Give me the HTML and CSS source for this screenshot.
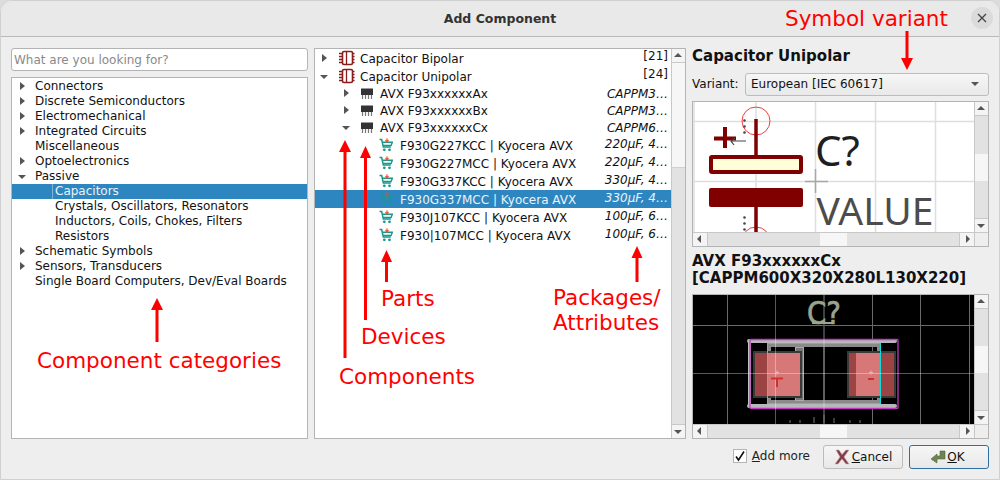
FILE: index.html
```html
<!DOCTYPE html>
<html lang="en">
<head>
<meta charset="utf-8">
<title>Add Component</title>
<link rel="stylesheet" href="styles.css">
</head>
<body>
<svg class="defs" width="0" height="0" aria-hidden="true">
  <symbol id="chip" viewBox="0 0 16 16">
    <rect x="3.500" y="1.500" width="10" height="13" rx="1.500" fill="#fff" stroke="#8a1c1c" stroke-width="1.600"/>
    <path d="M7.500 2v12M0 3.500h3M0 6.500h3M0 9.500h3M0 12.500h3M13.500 3.500h2M13.500 6.500h2M13.500 9.500h2M13.500 12.500h2" stroke="#8a1c1c" stroke-width="1.300" fill="none"/>
  </symbol>
  <symbol id="device" viewBox="0 0 14 14">
    <path d="M1 1.500h12v6.500H1z" fill="#333"/>
    <path d="M2.500 8v4M5.500 8v4M8.500 8v4M11.500 8v4" stroke="#777" stroke-width="1.200"/>
  </symbol>
  <symbol id="cart" viewBox="0 0 14 14">
    <path d="M.5 1.500h2.200l1.600 7.500h7.500" fill="none" stroke="#179a8c" stroke-width="1.500"/>
    <path d="M3.400 4.200h10l-1.300 3.300H4.200" fill="none" stroke="#179a8c" stroke-width="1.400"/>
    <circle cx="5.300" cy="11.800" r="1.400" fill="#179a8c"/><circle cx="10.500" cy="11.800" r="1.400" fill="#179a8c"/>
    <path d="M8 0v2.500M6.500 2.200h3L8 4.500z" fill="#e8502a" stroke="#e8502a" stroke-width=".8"/>
  </symbol>
</svg>

<main class="window">
  <header class="titlebar">
    <h1 class="title">Add Component</h1>
    <button class="close" type="button" aria-label="Close"><svg class="close-ic" viewBox="0 0 10 10"><path d="M1 1l8 8M9 1l-8 8" stroke="#444" stroke-width="1.300"/></svg></button>
  </header>

  <div class="content">
    <section class="col col-left">
      <div class="search">What are you looking for?</div>
      <ul class="cats">
        <li class="cat"><i class="tw r"></i>Connectors</li>
        <li class="cat"><i class="tw r"></i>Discrete Semiconductors</li>
        <li class="cat"><i class="tw r"></i>Electromechanical</li>
        <li class="cat"><i class="tw r"></i>Integrated Circuits</li>
        <li class="cat"><i class="tw"></i>Miscellaneous</li>
        <li class="cat"><i class="tw r"></i>Optoelectronics</li>
        <li class="cat"><i class="tw d"></i>Passive</li>
        <li class="cat sub sel"><span class="focus-label">Capacitors</span></li>
        <li class="cat sub">Crystals, Oscillators, Resonators</li>
        <li class="cat sub">Inductors, Coils, Chokes, Filters</li>
        <li class="cat sub">Resistors</li>
        <li class="cat"><i class="tw r"></i>Schematic Symbols</li>
        <li class="cat"><i class="tw r"></i>Sensors, Transducers</li>
        <li class="cat"><i class="tw"></i>Single Board Computers, Dev/Eval Boards</li>
      </ul>
    </section>

    <section class="col-mid">
      <ul class="parts">
        <li class="row"><i class="tw r"></i><svg class="ic-chip"><use href="#chip"/></svg><span class="name">Capacitor Bipolar</span><span class="count">[21]</span></li>
        <li class="row"><i class="tw d"></i><svg class="ic-chip"><use href="#chip"/></svg><span class="name">Capacitor Unipolar</span><span class="count">[24]</span></li>
        <li class="row l2"><i class="tw r"></i><svg class="ic-dev"><use href="#device"/></svg><span class="name">AVX F93xxxxxxAx</span><span class="val">CAPPM3…</span></li>
        <li class="row l2"><i class="tw r"></i><svg class="ic-dev"><use href="#device"/></svg><span class="name">AVX F93xxxxxxBx</span><span class="val">CAPPM3…</span></li>
        <li class="row l2"><i class="tw d"></i><svg class="ic-dev"><use href="#device"/></svg><span class="name">AVX F93xxxxxxCx</span><span class="val">CAPPM6…</span></li>
        <li class="row l3"><svg class="ic-cart"><use href="#cart"/></svg><span class="name">F930G227KCC | Kyocera AVX</span><span class="val">220μF, 4…</span></li>
        <li class="row l3"><svg class="ic-cart"><use href="#cart"/></svg><span class="name">F930G227MCC | Kyocera AVX</span><span class="val">220μF, 4…</span></li>
        <li class="row l3"><svg class="ic-cart"><use href="#cart"/></svg><span class="name">F930G337KCC | Kyocera AVX</span><span class="val">330μF, 4…</span></li>
        <li class="row l3 sel"><svg class="ic-cart"><use href="#cart"/></svg><span class="name">F930G337MCC | Kyocera AVX</span><span class="val">330μF, 4…</span></li>
        <li class="row l3"><svg class="ic-cart"><use href="#cart"/></svg><span class="name">F930J107KCC | Kyocera AVX</span><span class="val">100μF, 6…</span></li>
        <li class="row l3"><svg class="ic-cart"><use href="#cart"/></svg><span class="name">F930|107MCC | Kyocera AVX</span><span class="val">100μF, 6…</span></li>
      </ul>
      <div class="vbar">
        <span class="sb-btn up"></span><span class="thumb-long"></span><span class="track"></span><span class="sb-btn down"></span>
      </div>
    </section>

    <section class="col col-right">
      <h2 class="sym-title">Capacitor Unipolar</h2>
      <div class="variant">
        <label class="variant-label">Variant:</label>
        <div class="combo"><span>European [IEC 60617]</span><i class="combo-arrow"></i></div>
      </div>

      <div class="viewer viewer-sym">
        <svg class="canvas" viewBox="693 102 281 130">
          <rect x="693" y="102" width="281" height="130" fill="#fff"/>
          <path d="M694 102v130M756 102v130M815.500 102v130M875.500 102v130M935.500 102v130M693 121.500h281M693 181.500h281" stroke="#dedede" stroke-width="1.500" fill="none"/>
          <path d="M805 181.500h23M815.500 169v24" stroke="#a8a8a8" stroke-width="1.500" fill="none"/>
          <circle cx="756" cy="121" r="14" fill="none" stroke="#f04040" stroke-width="1"/>
          <circle cx="756" cy="241" r="14" fill="none" stroke="#f04040" stroke-width="1"/>
          <path d="M756 119v36M756 207v25" stroke="#800000" stroke-width="3.500"/>
          <path d="M714 138.500h22M725 127v21" stroke="#800000" stroke-width="4"/>
          <rect x="711" y="157" width="90" height="15" rx="1" fill="#ffffd8" stroke="#800000" stroke-width="4"/>
          <rect x="709" y="188" width="94" height="19" rx="2" fill="#800000"/>
          <path d="M746 141h-15M735 138l-4 3 3 4" fill="none" stroke="#444" stroke-width="1.200"/>
          <g fill="#445"><circle cx="744.500" cy="120.500" r="1.300"/><circle cx="744.500" cy="126.500" r="1.300"/><circle cx="744.500" cy="132.500" r="1.300"/><circle cx="744.500" cy="217.500" r="1.300"/><circle cx="744.500" cy="223.500" r="1.300"/><circle cx="744.500" cy="229.500" r="1.300"/></g>
          <text class="sym-ref" x="815" y="166">C?</text>
          <text class="sym-val" x="816.500" y="225">VALUE</text>
        </svg>
        <div class="vbar"><span class="sb-btn up"></span><span class="track"></span><span class="thumb"></span><span class="track"></span><span class="sb-btn down"></span></div>
        <div class="hbar"><span class="sb-btn left"></span><span class="track"></span><span class="thumb"></span><span class="track"></span><span class="sb-btn right"></span></div>
        <span class="corner"></span>
      </div>

      <h2 class="fp-title">AVX F93xxxxxxCx<br>[CAPPM600X320X280L130X220]</h2>

      <div class="viewer viewer-fp">
        <svg class="canvas" viewBox="693 295 281 129">
          <rect x="693" y="295" width="281" height="129" fill="#000"/>
          <path d="M727.500 295v129M872.500 295v129M920.500 295v129M969.500 295v129M693 325.500h281" stroke="#6a6a6a" stroke-width="1" fill="none"/>
          <path d="M824 295v129" stroke="#555" stroke-width="1.500"/>
          <text class="fp-ref" x="807" y="324" textLength="34" lengthAdjust="spacingAndGlyphs">C?</text>
          <path d="M812 323h20" stroke="#9aa58c" stroke-width="2"/>
          <rect x="769" y="345" width="110" height="57" fill="none" stroke="#8a8a8a" stroke-width="4"/>
          <rect x="795.500" y="347.500" width="8" height="53" fill="#777" stroke="#aaa" stroke-width="1"/>
          <rect x="753" y="351" width="49" height="47" fill="#3a3a3a"/>
          <rect x="847" y="351" width="49" height="47" fill="#3a3a3a"/>
          <rect x="755" y="353" width="45" height="43" fill="#9c4444"/>
          <rect x="849" y="353" width="45" height="43" fill="#9c4444"/>
          <rect x="767" y="353" width="33" height="43" fill="#d67878"/>
          <rect x="856" y="353" width="25" height="43" fill="#d67878"/>
          <path d="M749 341h146M749 406h146" stroke="#b8b8b8" stroke-width="4" stroke-linecap="round"/>
          <path d="M749.500 341v65" stroke="#c0c0c0" stroke-width="3"/>
          <rect x="767.500" y="343.500" width="113" height="60" fill="none" stroke="#10dcdc" stroke-width="1"/>
          <rect x="750" y="339.500" width="148" height="69" rx="1" fill="none" stroke="#c038c0" stroke-width="1.300"/>
          <path d="M775.500 295v129M693 373.500h281M824 339v70" stroke="#fff" stroke-opacity=".35" stroke-width="1"/>
          <path d="M771 378.500h12M777 378v9M868 379h6" stroke="#d03030" stroke-width="2"/>
          <path d="M775 372.500h4M777 370.500v4M869 372.500h4M871 370.500v4" stroke="#eeb0b0" stroke-width="1"/>
          <path d="M814 423v-6M824 423v-8M834 423v-5M790 423v-3M800 423v-3M850 423v-3M860 423v-3" stroke="#778" stroke-width="1"/>
        </svg>
        <div class="vbar"><span class="sb-btn up"></span><span class="track"></span><span class="thumb"></span><span class="track"></span><span class="sb-btn down"></span></div>
        <div class="hbar"><span class="sb-btn left"></span><span class="track"></span><span class="thumb"></span><span class="track"></span><span class="sb-btn right"></span></div>
        <span class="corner"></span>
      </div>
    </section>
  </div>

  <footer class="footer">
    <label class="check"><span class="box"><svg class="tick" viewBox="0 0 12 12"><path d="M2 6.500l2.500 3.500L10 1.500" fill="none" stroke="#111" stroke-width="1.600"/></svg></span><span><u>A</u>dd more</span></label>
    <button class="btn" type="button">
      <svg class="btn-ic" viewBox="0 0 16 16"><path d="M2 1h3l3 4.500L12 1h3l-5 7 5 7h-3l-4-5-4 5H1l5-7z" fill="#8c3a48" stroke="#b9b0b0" stroke-width=".6"/></svg>
      <span><u>C</u>ancel</span>
    </button>
    <button class="btn btn-ok" type="button">
      <svg class="btn-ic" viewBox="0 0 16 16"><path d="M1 10l6-5v2h3V2h5v8H7v4z" fill="#6d8550" stroke="#58663f" stroke-width=".6"/></svg>
      <span><u>O</u>K</span>
    </button>
  </footer>

  <div class="notes">
    <span class="note n-variant">Symbol variant</span>
    <span class="note n-cats">Component categories</span>
    <span class="note n-comps">Components</span>
    <span class="note n-devs">Devices</span>
    <span class="note n-parts">Parts</span>
    <span class="note n-pkgs">Packages/<br>Attributes</span>
    <svg class="arrows" viewBox="0 0 1000 480">
      <g fill="none" stroke="#f00" stroke-width="3">
        <path d="M907 31v30M157 342v-34M345 358V152M365.500 320V152M386.500 282v-24M637 282v-26"/>
      </g>
      <g fill="#f00">
        <path d="M901 58l6 12 6-12zM151 310l6-12 6 12zM339 152l6-12 6 12zM360 158l5.500-12 5.500 12zM381 262l5.500-12 5.500 12zM631.500 258l5.500-12 5.500 12z"/>
      </g>
    </svg>
  </div>
</main>
</body>
</html>
```

FILE: styles.css
```css
* { box-sizing: border-box; }
html, body { margin: 0; padding: 0; background: #dcdcdc; }
body { width: 1000px; height: 480px; overflow: hidden; font: 12px/15px "DejaVu Sans", sans-serif; color: #111; }
.defs { position: absolute; }
ul { list-style: none; margin: 0; padding: 0; }
h1, h2 { margin: 0; }

.window { position: relative; width: 1000px; height: 480px; background: #eeeeee; border-radius: 12px 12px 0 0; border: 1px solid #d0d0d0; display: flex; flex-direction: column; }
.titlebar { height: 36px; flex: none; background: #e9e9e9; border-bottom: 1px solid #b9b9b9; border-radius: 11px 11px 0 0; display: flex; align-items: center; justify-content: center; position: relative; }
.title { font-size: 12.500px; font-weight: 700; color: #333; }
.close { position: absolute; right: 6px; top: 6px; width: 22px; height: 22px; border: 0; padding: 6px; border-radius: 50%; background: #dbdbdb; }
.close-ic { display: block; width: 10px; height: 10px; }

.content { height: 402px; flex: none; padding: 11px 0 0 10px; display: flex; gap: 6px; }
.col { width: 297px; flex: none; display: flex; flex-direction: column; }
.col-mid { width: 372px; flex: none; height: 391px; background: #fff; border: 1px solid #b4b4b4; display: flex; }

.search { height: 23px; background: #fff; border: 1px solid #b4b4b4; border-radius: 3px; padding: 4px 2px; color: #8a8a8a; line-height: 15px; }
.cats { margin-top: 6px; height: 362px; background: #fff; border: 1px solid #b4b4b4; padding-top: 1px; }
.cat { height: 15px; display: flex; align-items: center; line-height: 15px; }
.cat .tw { margin-left: 8px; }
.sub { padding-left: 43px; }
.sel { background: #2e86c1; color: #eaf2f8; }
.focus-label { border-left: 1px solid #7fb4d8; padding-left: 2px; margin-left: -3px; }

.tw { position: relative; display: block; flex: none; width: 15px; height: 15px; }
.tw.r::before { content: ""; position: absolute; left: 0; top: 3px; border-left: 5px solid #555; border-top: 4.500px solid transparent; border-bottom: 4.500px solid transparent; }
.tw.d::before { content: ""; position: absolute; left: -2px; top: 6px; border-top: 4px solid #555; border-left: 4.500px solid transparent; border-right: 4.500px solid transparent; }

.parts { flex: 1; min-width: 0; }
.row { height: 18px; display: flex; align-items: center; padding-right: 3px; }
.row.l2 { height: 17px; }
.row .tw { margin-left: 7px; width: 17px; }
.row.l2 .tw { margin-left: 29px; width: 16px; }
.row.l3 { padding-left: 64px; }
.ic-chip { width: 16px; height: 16px; flex: none; margin-right: 5px; }
.ic-dev { width: 14px; height: 14px; flex: none; margin-right: 6px; }
.ic-cart { width: 14px; height: 14px; flex: none; margin-right: 7px; }
.row .name { flex: 1; white-space: nowrap; padding-top: 2px; }
.row .count { margin-bottom: 3px; }
.row .val { font-style: italic; }
.row.l2 .val { padding-top: 2px; }
.row.l3 .val { margin-bottom: 2px; }
.sel .ic-cart { opacity: .7; }

.vbar { width: 14px; flex: none; display: flex; flex-direction: column; background: #e2e2e2; border-left: 1px solid #c8c8c8; }
.track { flex: 1; background: #e2e2e2; }
.thumb { flex: none; background: #f6f6f6; }
.vbar .thumb { height: 27px; }
.hbar .thumb { width: 27px; }
.thumb-long { flex: none; height: 105px; background: #f6f6f6; border-bottom: 1px solid #d0d0d0; }
.sb-btn { flex: none; position: relative; background: #f4f4f4; }
.vbar .sb-btn { height: 14px; }
.hbar .sb-btn { width: 15px; }
.sb-btn.up { border-bottom: 1px solid #c8c8c8; }
.sb-btn.down { border-top: 1px solid #c8c8c8; }
.sb-btn.left { border-right: 1px solid #c8c8c8; }
.sb-btn.right { border-left: 1px solid #c8c8c8; }
.sb-btn::before { content: ""; position: absolute; }
.sb-btn.up::before { left: 2px; top: 4px; border-bottom: 4px solid #555; border-left: 4px solid transparent; border-right: 4px solid transparent; }
.sb-btn.down::before { left: 2px; top: 5px; border-top: 4px solid #555; border-left: 4px solid transparent; border-right: 4px solid transparent; }
.sb-btn.left::before { left: 4px; top: 2px; border-right: 4px solid #555; border-top: 4px solid transparent; border-bottom: 4px solid transparent; }
.sb-btn.right::before { left: 6px; top: 2px; border-left: 4px solid #555; border-top: 4px solid transparent; border-bottom: 4px solid transparent; }

.sym-title { font-size: 15px; line-height: 17px; height: 17px; margin-bottom: 7px; }
.variant { display: flex; align-items: center; gap: 7px; height: 24px; }
.variant-label { flex: none; width: 46px; }
.combo { flex: 1; height: 23px; border: 1px solid #bcbcbc; border-radius: 3px; background: linear-gradient(#f6f6f6, #e9e9e9); display: flex; align-items: center; justify-content: space-between; padding: 0 9px 0 5px; }
.combo-arrow { border-top: 4px solid #555; border-left: 4px solid transparent; border-right: 4px solid transparent; }

.viewer { display: grid; grid-template-columns: 281px 14px; grid-template-rows: 1fr 14px; border: 1px solid #b4b4b4; background: #f0f0f0; }
.viewer-sym { height: 146px; margin-top: 5px; }
.viewer-fp { height: 145px; }
.canvas { display: block; width: 281px; height: 130px; }
.viewer-fp .canvas { height: 129px; }
.hbar { display: flex; background: #e2e2e2; border-top: 1px solid #c8c8c8; }
.corner { background: #eee; border-top: 1px solid #c8c8c8; border-left: 1px solid #c8c8c8; }
.sym-ref { font: 42px "Noto Sans", sans-serif; fill: #1f1f1f; }
.sym-val { font: 39px "Noto Sans", sans-serif; fill: #4c4c4c; }
.fp-ref { font: 400 32px "DejaVu Sans", sans-serif; fill: #9aa58c; stroke: #9aa58c; stroke-width: .7px; }

.fp-title { font-size: 15px; line-height: 17px; height: 34px; margin: 6px 0 7px; font-weight: 700; white-space: nowrap; }

.footer { flex: 1; display: flex; align-items: flex-start; justify-content: flex-end; padding: 6px 10px 0 0; gap: 6px; }
.check { display: flex; align-items: center; gap: 5px; margin-right: 7px; height: 22px; color: #222; }
.box { width: 14px; height: 14px; border: 1px solid #b4b4b4; background: #fff; display: block; }
.tick { display: block; width: 12px; height: 12px; }
.btn { width: 80px; height: 24px; border: 1px solid #bcbcbc; border-radius: 3px; background: linear-gradient(#f6f6f6, #e8e8e8); font: 12px/15px "DejaVu Sans", sans-serif; color: #111; display: flex; align-items: center; justify-content: center; gap: 2px; padding: 0; }
.btn-ok { border-color: #2f6f9f; gap: 1px; padding-right: 3px; }
.btn-ic { width: 16px; height: 16px; }

.notes { position: absolute; left: -1px; top: -1px; width: 1000px; height: 480px; pointer-events: none; }
.arrows { position: absolute; left: 0; top: 0; width: 1000px; height: 480px; }
.note { position: absolute; color: #f00; font-size: 21.500px; line-height: 25px; white-space: nowrap; }
.n-variant { left: 785px; top: 6px; }
.n-cats { left: 37px; top: 348px; }
.n-comps { left: 339px; top: 364px; }
.n-devs { left: 361px; top: 324px; }
.n-parts { left: 381px; top: 286px; }
.n-pkgs { left: 553px; top: 285px; }
```
